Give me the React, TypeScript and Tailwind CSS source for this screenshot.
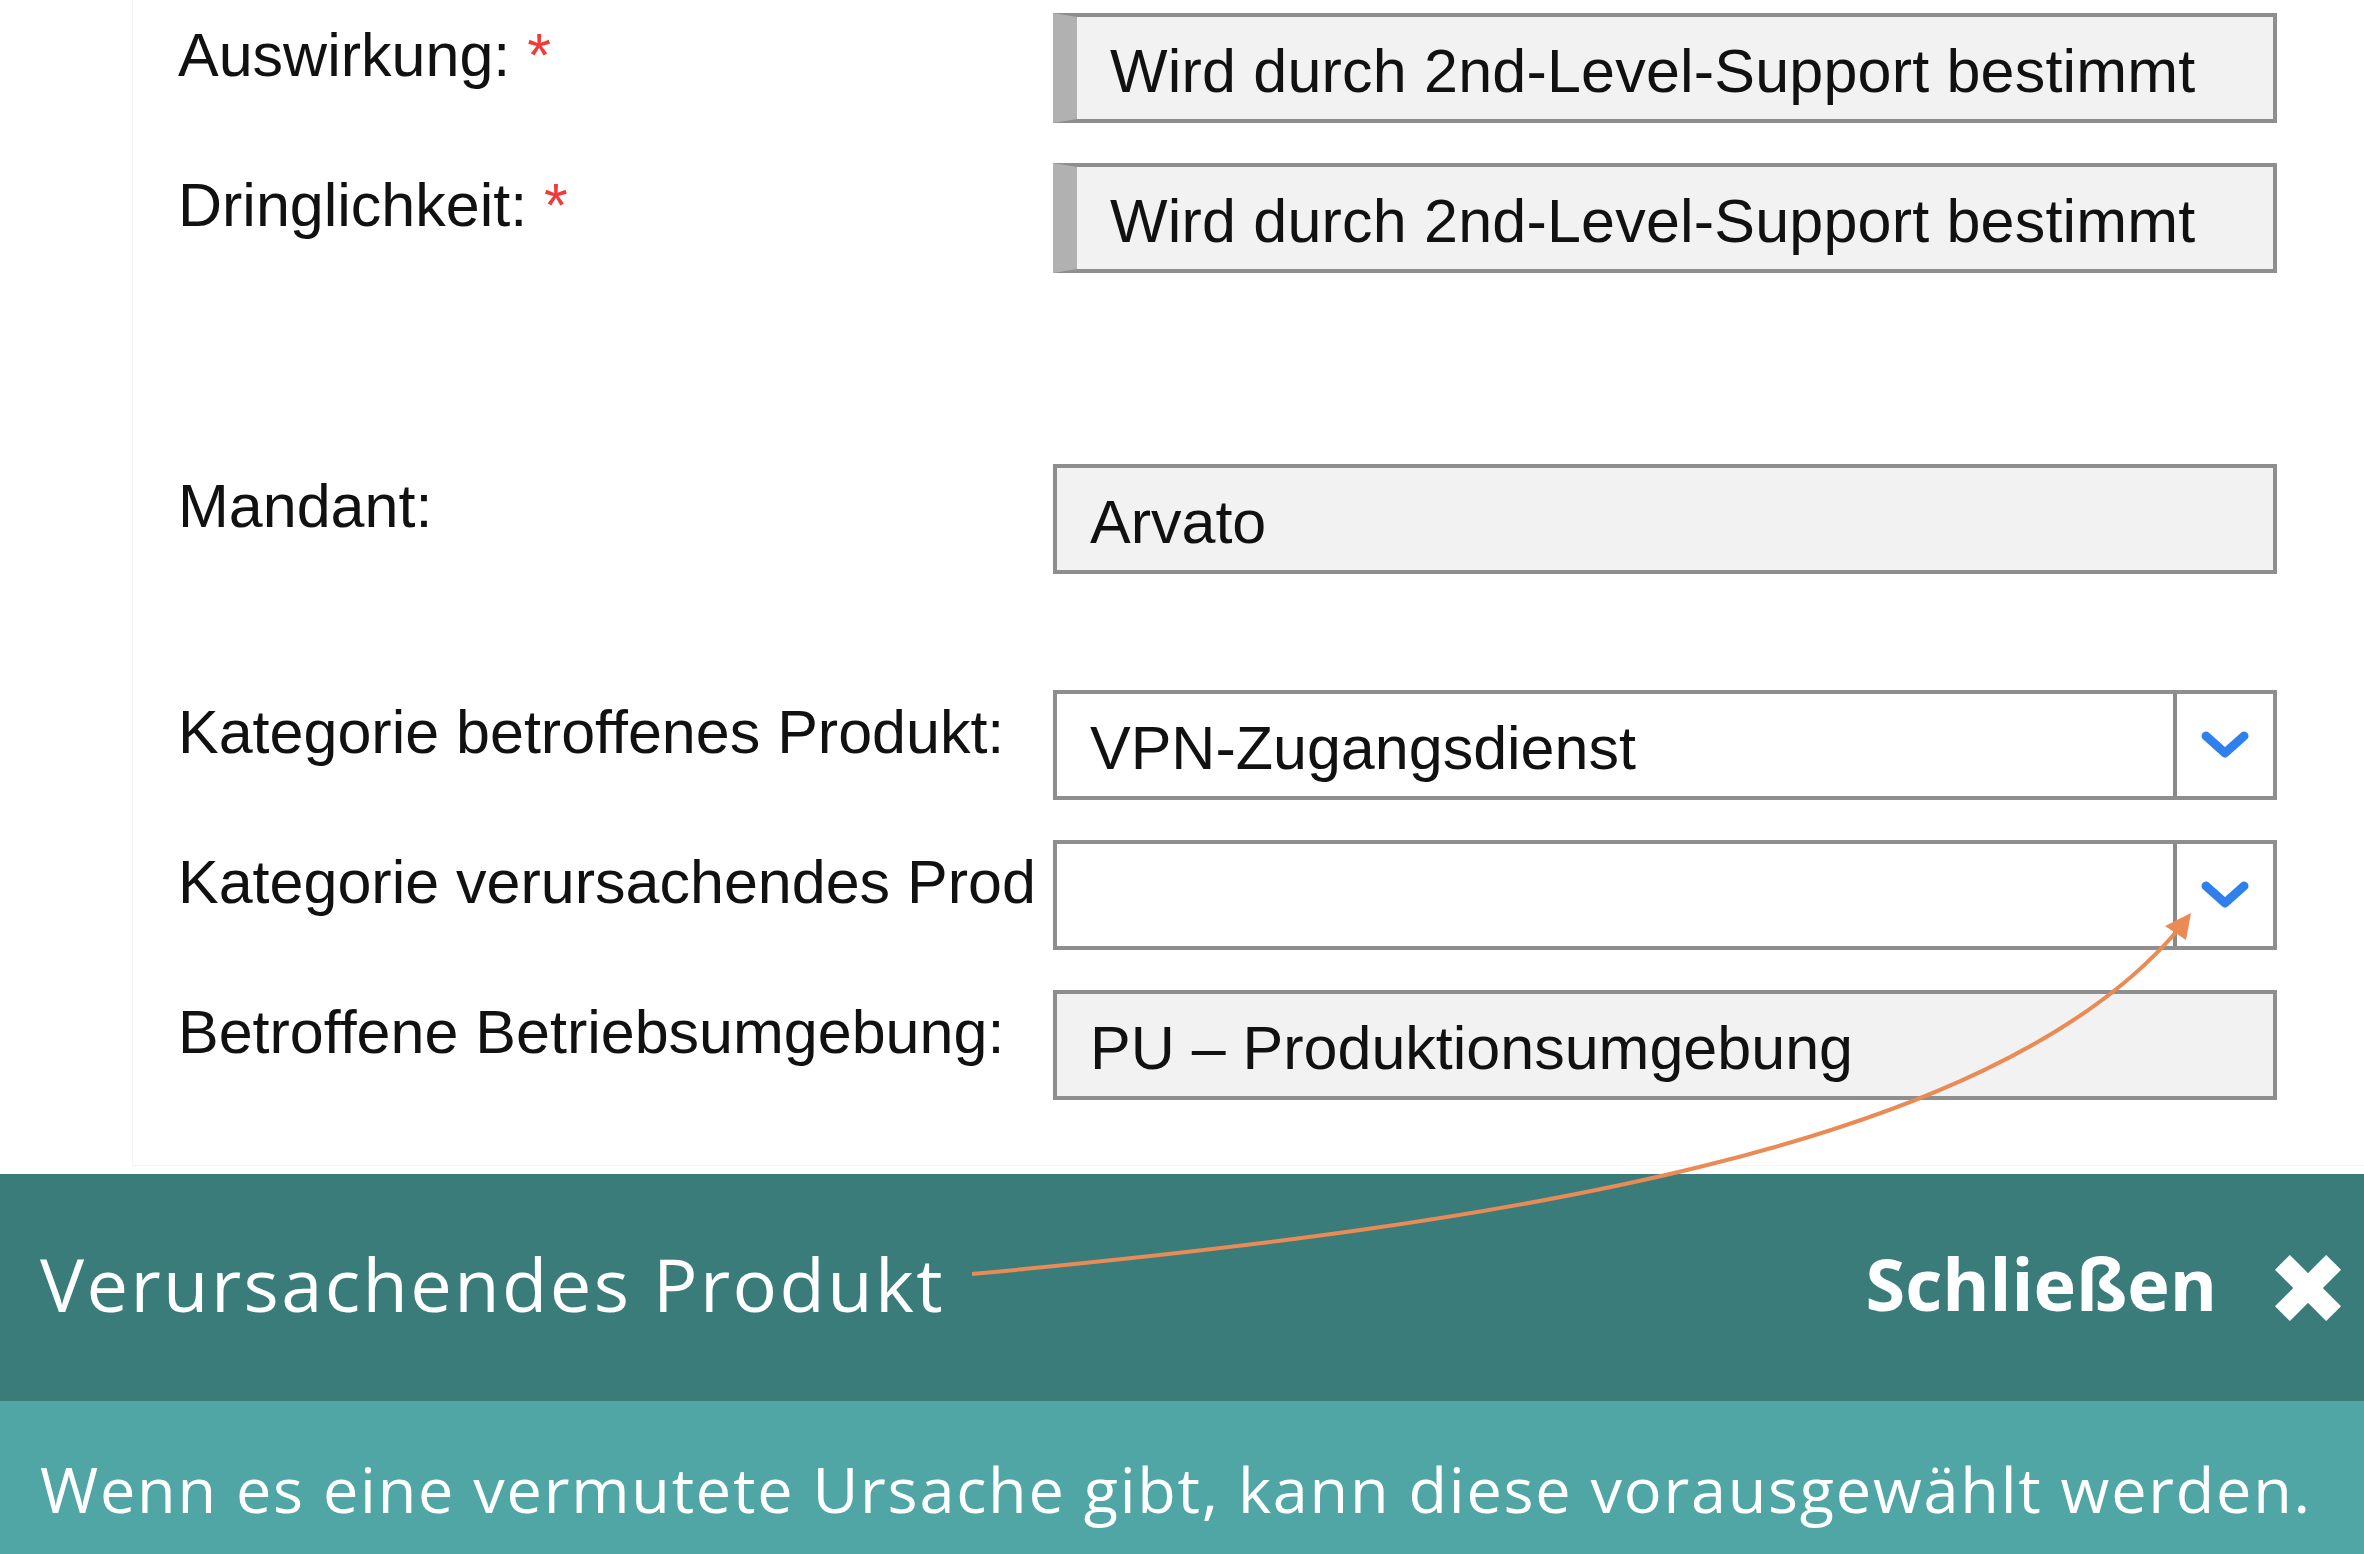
import React from "react";

const sans = { fontFamily: '"Liberation Sans", Arial, sans-serif' };
const banner = { fontFamily: '"Open Sans", "Noto Sans", sans-serif' };

function Label({ text, required }: { text: string; required?: boolean }) {
  return (
    <div
      className="w-[866px] mr-[9px] shrink-0 overflow-hidden whitespace-nowrap text-[61px] leading-[70px] pt-[7px] text-[#111]"
      style={sans}
    >
      {text}
      {required && <span className="text-[#f23a3a]"> *</span>}
    </div>
  );
}

function ReadOnlyBar({ value }: { value: string }) {
  return (
    <div
      className="w-[1224px] h-[110px] shrink-0 bg-[#f2f2f2] border-4 border-[#8e8e8e] border-l-[24px] border-l-[#b1b1b1] pl-[33px] pt-[19px] text-[61px] leading-[70px] tracking-[0.2px] text-[#111] whitespace-nowrap"
      style={sans}
    >
      {value}
    </div>
  );
}

function ReadOnly({ value }: { value: string }) {
  return (
    <div
      className="w-[1224px] h-[110px] shrink-0 bg-[#f2f2f2] border-4 border-[#8e8e8e] pl-[33px] pt-[19px] text-[61px] leading-[70px] text-[#111] whitespace-nowrap"
      style={sans}
    >
      {value}
    </div>
  );
}

function Select({ value }: { value: string }) {
  return (
    <div className="w-[1224px] h-[110px] shrink-0 bg-white border-4 border-[#8e8e8e] flex">
      <div
        className="flex-1 pl-[33px] pt-[19px] text-[61px] leading-[70px] text-[#111] whitespace-nowrap"
        style={sans}
      >
        {value}
      </div>
      <div className="w-[4px] bg-[#8a8a8a]" />
      <div className="w-[96px] flex items-center justify-center">
        <svg width="48" height="28" viewBox="0 0 48 28">
          <polyline
            points="5,5 24,22 43,5"
            fill="none"
            stroke="#2f80ec"
            strokeWidth="9"
            strokeLinecap="round"
            strokeLinejoin="round"
          />
        </svg>
      </div>
    </div>
  );
}

export default function App() {
  return (
    <div className="relative w-[2364px] h-[1554px] bg-white overflow-hidden flex flex-col">
      <div className="h-[1174px] shrink-0">
        <div className="ml-[132px] h-[1166px] border-l border-b border-[#f4f4f4] pl-[45px] pt-[13px] flex flex-col">
          <div className="flex">
            <Label text="Auswirkung:" required />
            <ReadOnlyBar value="Wird durch 2nd-Level-Support bestimmt" />
          </div>
          <div className="flex mt-[40px]">
            <Label text="Dringlichkeit:" required />
            <ReadOnlyBar value="Wird durch 2nd-Level-Support bestimmt" />
          </div>
          <div className="flex mt-[191px]">
            <Label text="Mandant:" />
            <ReadOnly value="Arvato" />
          </div>
          <div className="flex mt-[116px]">
            <Label text="Kategorie betroffenes Produkt:" />
            <Select value="VPN-Zugangsdienst" />
          </div>
          <div className="flex mt-[40px]">
            <Label text="Kategorie verursachendes Prod" />
            <Select value="" />
          </div>
          <div className="flex mt-[40px]">
            <Label text="Betroffene Betriebsumgebung:" />
            <ReadOnly value="PU – Produktionsumgebung" />
          </div>
        </div>
      </div>

      <div className="h-[227px] shrink-0 bg-[#3a7c7a] flex items-start pt-[73px] pl-[40px] pr-[23px] text-white">
        <div className="text-[74px] leading-[74px] tracking-[2.4px] whitespace-nowrap" style={banner}>
          Verursachendes Produkt
        </div>
        <div
          className="ml-auto mt-[-1px] text-[72px] leading-[74px] font-bold whitespace-nowrap"
          style={banner}
        >
          Schließen
        </div>
        <svg className="ml-[58px] mt-[8px] shrink-0" width="66" height="66" viewBox="0 0 66 66">
          <line x1="7.4" y1="7.4" x2="58.6" y2="58.6" stroke="white" strokeWidth="21" />
          <line x1="58.6" y1="7.4" x2="7.4" y2="58.6" stroke="white" strokeWidth="21" />
        </svg>
      </div>

      <div className="flex-1 bg-[#4fa6a4] pl-[40px] pt-[56px] text-white">
        <div className="text-[63px] leading-[63px] tracking-[1.75px] whitespace-nowrap" style={banner}>
          Wenn es eine vermutete Ursache gibt, kann diese vorausgewählt werden.
        </div>
      </div>

      <svg
        className="absolute inset-0 pointer-events-none"
        width="2364"
        height="1554"
        viewBox="0 0 2364 1554"
      >
        <path
          d="M 972 1274 C 1500 1225, 1990 1150, 2177 931"
          fill="none"
          stroke="#ea8a55"
          strokeWidth="4"
        />
        <polygon points="2191,913 2165,926 2186,940" fill="#ea8a55" />
      </svg>
    </div>
  );
}
